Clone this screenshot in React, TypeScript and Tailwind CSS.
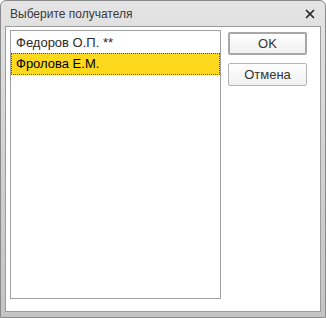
import { X } from 'lucide-react';

const recipients = [
  { id: 1, name: 'Федоров О.П. **', selected: false },
  { id: 2, name: 'Фролова Е.М.', selected: true },
];

const App = () => {
  return (
    <div
      className="w-[326px] h-[318px] flex flex-col rounded-t-[6px] border border-[#8a8a8a] bg-gradient-to-b from-[#e4e4e4] via-[#d2d2d2] to-[#c4c4c4] text-[#333333]"
      style={{ fontFamily: '"Liberation Sans", Arial, sans-serif' }}
    >
      <div className="h-[25px] flex items-center justify-between pl-[9px] pr-[8px]">
        <span className="text-[12px] text-[#3a3a3a]">Выберите получателя</span>
        <X size={14} strokeWidth={3} className="text-[#2a2a2a]" />
      </div>
      <div className="flex-1 mx-[4px] mb-[5px] bg-white border border-[#9c9c9c] flex gap-[7px] pt-[3px] pb-[12px] pl-[4px] pr-[12px]">
        <div className="w-[211px] border border-[#a0a0a0] py-[1px] flex flex-col">
          {recipients.map((r) => (
            <div
              key={r.id}
              className={
                r.selected
                  ? 'h-[22px] flex items-center px-[4px] text-[13px] text-black bg-[#fcd91c] border border-dotted border-[#3050c0]'
                  : 'h-[21px] flex items-center px-[5px] text-[13px] text-[#2a2a2a]'
              }
            >
              {r.name}
            </div>
          ))}
        </div>
        <div className="flex flex-col gap-[8px] pt-[2px]">
          <button className="w-[79px] h-[23px] border-2 border-[#a8a8a8] rounded-[2px] bg-gradient-to-b from-white to-[#f0f0f0] text-[13px] text-[#333333]">
            OK
          </button>
          <button className="w-[79px] h-[23px] border border-[#b4b4b4] rounded-[2px] bg-gradient-to-b from-white to-[#f0f0f0] text-[13px] text-[#333333]">
            Отмена
          </button>
        </div>
      </div>
    </div>
  );
};

export default App;
